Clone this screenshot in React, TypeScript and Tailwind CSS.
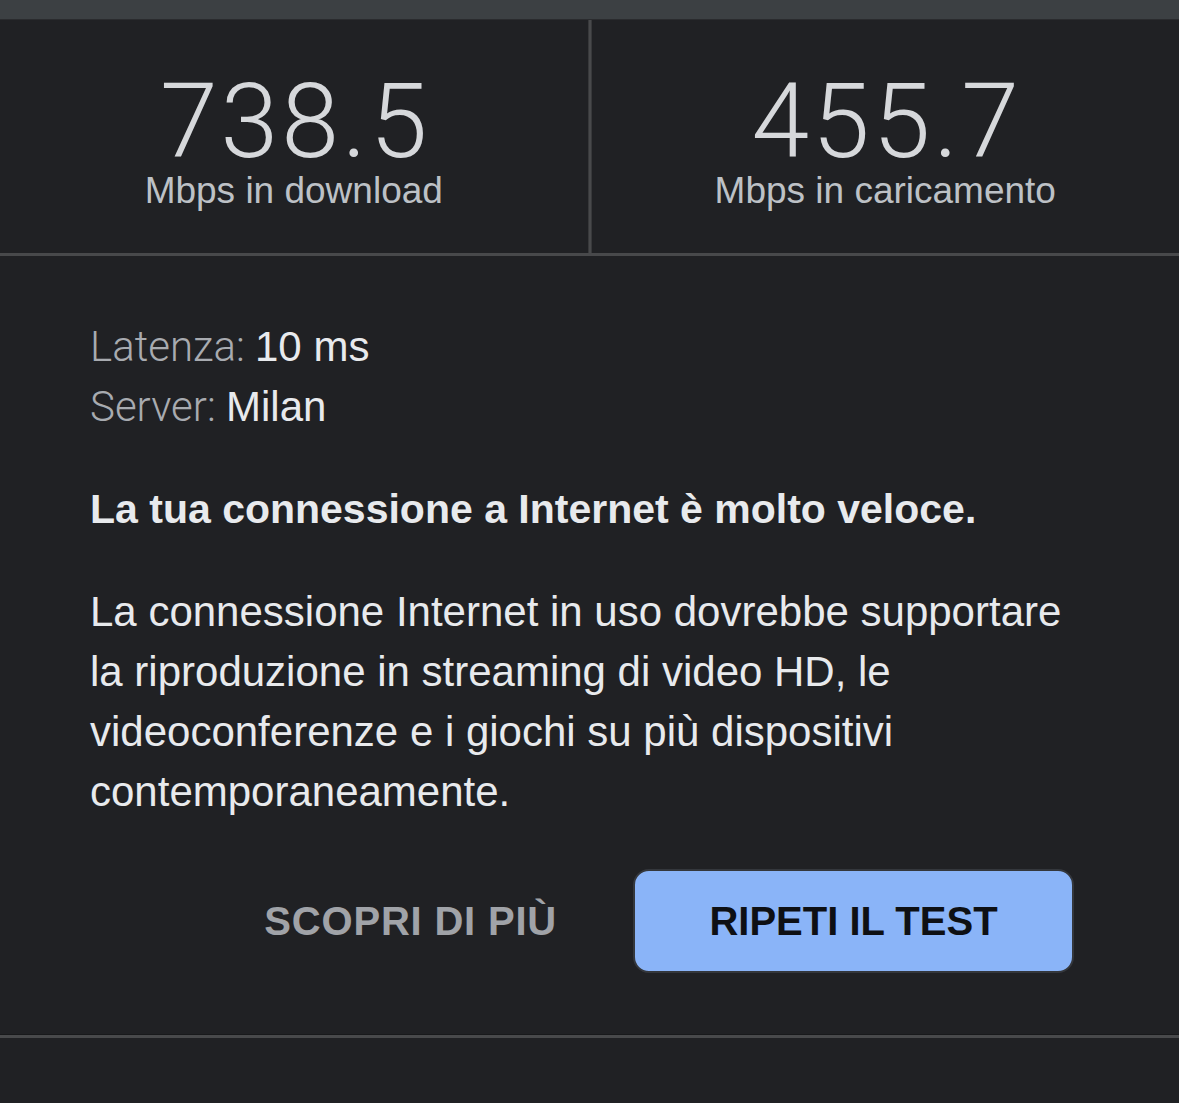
const sans = "font-['Liberation_Sans']";
const light = "font-['Roboto'] font-light";

function Speed({ value, label }: { value: string; label: string }) {
  return (
    <div className="flex-1 flex flex-col items-center pt-[57px]">
      <div className={`${light} text-[104px] leading-[90px] text-[#d6d8db] tracking-[3px] pl-[3px]`}>
        {value}
      </div>
      <div className={`${sans} text-[37px] leading-[40px] text-[#bdc1c6] mt-[4px]`}>
        {label}
      </div>
    </div>
  );
}

export default function App() {
  return (
    <div className="w-[1179px] h-[1103px] bg-[#202124] flex flex-col">
      {/* top strip */}
      <div className="h-[19px] bg-[#3c4043]" />
      <div className="h-[1px] bg-[#2a2b2e]" />

      {/* speeds */}
      <div className="flex h-[233px]">
        <Speed value="738.5" label="Mbps in download" />
        <div className="w-[4px] bg-[#48494b] border-x border-[#38393b]" />
        <Speed value="455.7" label="Mbps in caricamento" />
      </div>
      <div className="h-[3px] bg-[#48494b]" />

      {/* details */}
      <div className={`${sans} px-[90px] pt-[61px] text-[42px] leading-[60px] text-[#e8eaed]`}>
        <div>
          <span className={`${light} text-[#a8abb0]`}>Latenza: </span>
          <span>10 ms</span>
        </div>
        <div>
          <span className={`${light} text-[#a8abb0]`}>Server: </span>
          <span>Milan</span>
        </div>

        <p className="font-bold text-[41px] mt-[42px]">La tua connessione a Internet è molto veloce.</p>

        <p className="mt-[43px] w-[1000px]">
          La connessione Internet in uso dovrebbe supportare la riproduzione in streaming di video HD,
          le videoconferenze e i giochi su più dispositivi contemporaneamente.
        </p>

        <div className="flex justify-end items-center gap-[76px] mt-[47px] pr-[15px]">
          <button className="font-bold text-[40px] text-[#a0a3a8] tracking-[0.8px]">SCOPRI DI PIÙ</button>
          <button className="w-[441px] h-[104px] rounded-[16px] bg-[#8ab4f8] border-2 border-[#34373c] font-bold text-[40px] text-[#0e1014]">
            RIPETI IL TEST
          </button>
        </div>
      </div>

      <div className="mt-auto mb-[65px]">
        <div className="h-[1px] bg-[#18191b]" />
        <div className="h-[3px] bg-[#48494b]" />
      </div>
    </div>
  );
}
